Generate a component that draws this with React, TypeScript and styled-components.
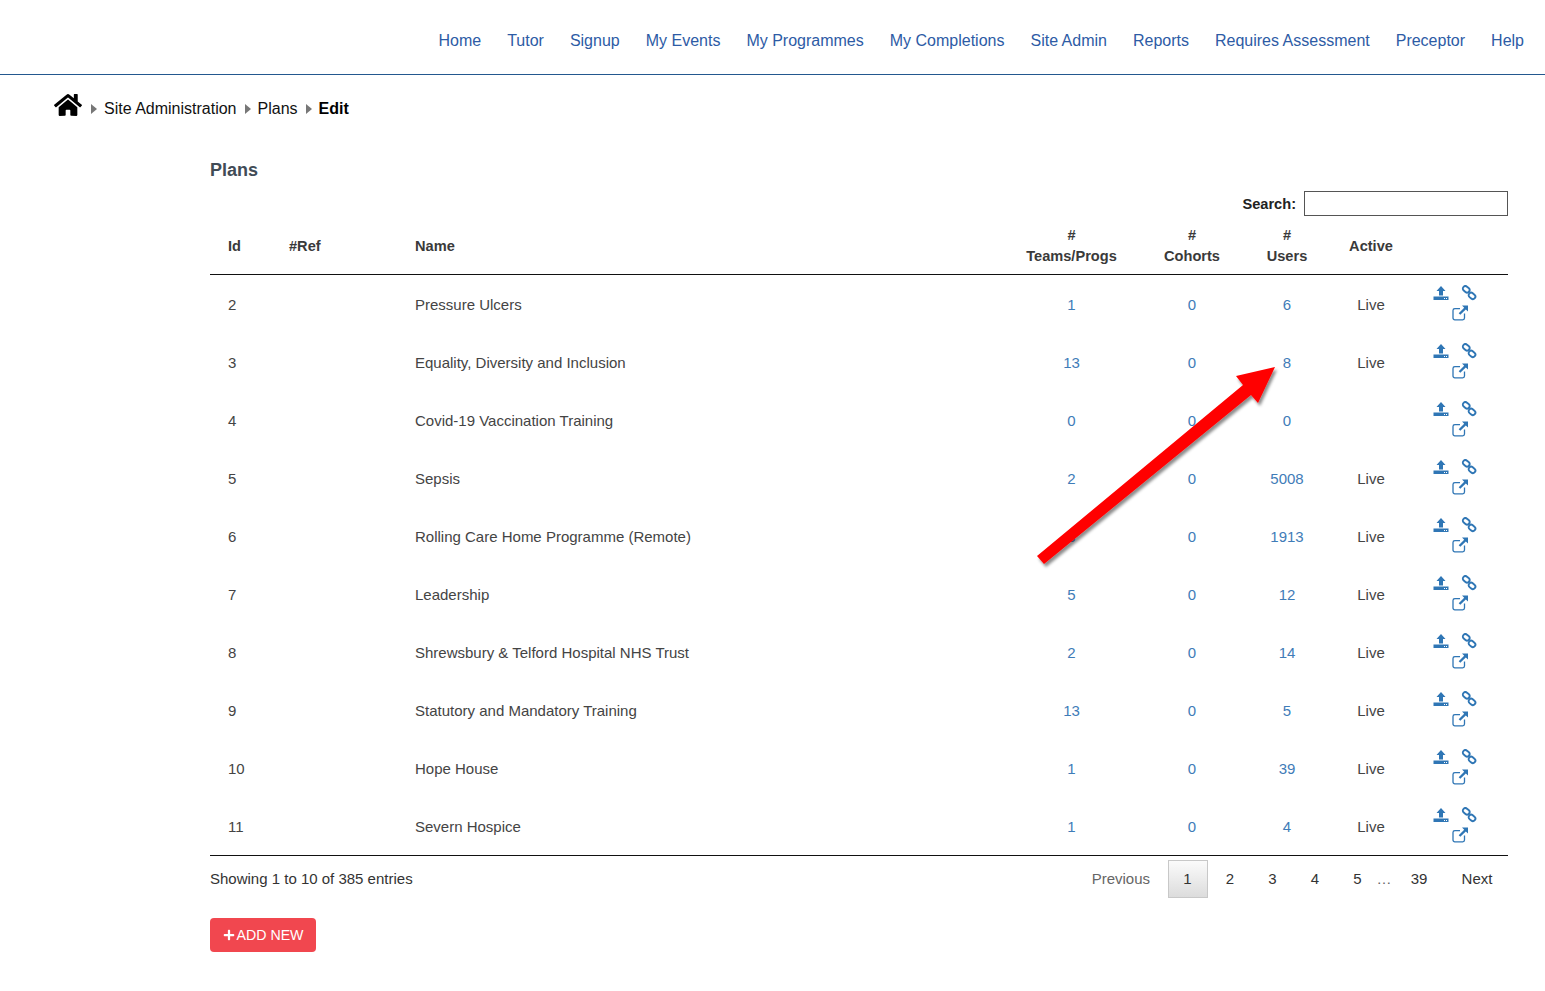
import React from 'react';
import styled, {createGlobalStyle} from 'styled-components';
import {FaHome, FaPlus} from 'react-icons/fa';

const GlobalStyle = createGlobalStyle`
    html, body {
        margin: 0;
        padding: 0;
        background: #fff;
        font-family: "Liberation Sans", Arial, sans-serif;
    }
`;

const Page = styled.div`
    position: relative;
    width: 1545px;
    height: 991px;
    overflow: hidden;
`;

const TopNav = styled.nav`
    display: flex;
    justify-content: flex-end;
    align-items: center;
    gap: 26px;
    height: 75px;
    padding: 8px 21px 0 0;
    box-sizing: border-box;
    border-bottom: 1px solid #23588f;
`;

const NavLink = styled.a`
    font-size: 16px;
    color: #2d5ba5;
    text-decoration: none;
`;

const Crumbs = styled.div`
    display: flex;
    align-items: center;
    height: 68px;
    padding-left: 54px;
    font-size: 16px;
    color: #111;
`;

const HomeIcon = styled(FaHome)`
    width: 28px;
    height: 28px;
    color: #000;
    margin: -8px 1px 0 0;
`;

const Caret = styled.span`
    width: 0;
    height: 0;
    margin: 0 7px 0 8px;
    border-left: 6px solid #777;
    border-top: 5px solid transparent;
    border-bottom: 5px solid transparent;
`;

const CurrentCrumb = styled.b`
    color: #000;
`;

const Main = styled.main`
    margin: 0 37px 0 210px;
`;

const Title = styled.h1`
    margin: 0;
    padding-top: 17px;
    height: 31px;
    line-height: 21px;
    font-size: 18px;
    font-weight: bold;
    color: #414b56;
`;

const SearchRow = styled.label`
    display: flex;
    justify-content: flex-end;
    align-items: center;
    gap: 8px;
    height: 25px;
    font-size: 14.6px;
    font-weight: bold;
    color: #222;
`;

const SearchInput = styled.input`
    width: 204px;
    height: 25px;
    box-sizing: border-box;
    border: 1px solid #555;
    background: #fff;
`;

const Table = styled.table`
    width: 1298px;
    margin-top: 3px;
    table-layout: fixed;
    border-collapse: separate;
    border-spacing: 0;
    border-bottom: 1px solid #111;
`;

const HeadCell = styled.th<{$center?: boolean; $pad?: number}>`
    height: 56px;
    padding: 0 0 ${p => (p.$center ? 2 : 0)}px ${p => p.$pad || 0}px;
    box-sizing: border-box;
    border-bottom: 1px solid #111;
    font-size: 14.6px;
    line-height: 21px;
    font-weight: bold;
    color: #3a3a3a;
    text-align: ${p => (p.$center ? 'center' : 'left')};
`;

const Cell = styled.td<{$center?: boolean; $pad?: number}>`
    height: 58px;
    padding: 0 0 0 ${p => p.$pad || 0}px;
    box-sizing: border-box;
    font-size: 15px;
    color: #444;
    text-align: ${p => (p.$center ? 'center' : 'left')};
`;

const CountLink = styled.a`
    color: #3f7cb8;
    text-decoration: none;
`;

const Actions = styled.div`
    display: flex;
    flex-wrap: wrap;
    justify-content: center;
    width: 62px;
    margin: -2px 0 0 8px;
`;

const ActionIcon = styled.svg`
    display: block;
    width: 16px;
    height: 16px;
    margin: 2px 6px;
    fill: #2f76b5;
`;

const ExternalIcon = styled(ActionIcon)`
    margin-left: 16px;
`;

const Footer = styled.div`
    display: flex;
    justify-content: space-between;
    align-items: center;
    height: 46px;
    font-size: 15px;
    color: #333;
`;

const EntryCount = styled.span`
    margin-bottom: 2px;
`;

const Pager = styled.div`
    display: flex;
    align-items: center;
    padding-right: 11px;
`;

const PageItem = styled.a<{$active?: boolean; $muted?: boolean}>`
    display: flex;
    align-items: center;
    justify-content: center;
    box-sizing: border-box;
    min-width: 40px;
    height: 38px;
    margin-left: 2.5px;
    padding-bottom: 2px;
    color: ${p => (p.$muted ? '#666' : '#333')};
    border: 1px solid ${p => (p.$active ? '#c8c8c8' : 'transparent')};
    background: ${p => (p.$active ? 'linear-gradient(#fbfbfb, #dcdcdc)' : 'none')};
`;

const PrevItem = styled(PageItem)`
    margin-right: 14px;
`;

const NextItem = styled(PageItem)`
    margin-left: 18px;
`;

const Ellipsis = styled.span`
    width: 20px;
    margin: 0 0 2px -1px;
    color: #666;
`;

const AddButton = styled.button`
    display: flex;
    align-items: center;
    justify-content: center;
    gap: 2px;
    width: 106px;
    height: 34px;
    margin-top: 16px;
    padding: 0;
    border: 0;
    border-radius: 4px;
    background: #f1474f;
    color: #fff;
    font-family: inherit;
    font-size: 14.2px;
`;

const Arrow = styled.svg`
    position: absolute;
    left: 1020px;
    top: 350px;
    width: 280px;
    height: 230px;
    overflow: visible;
`;

const navItems = ['Home', 'Tutor', 'Signup', 'My Events', 'My Programmes', 'My Completions', 'Site Admin', 'Reports', 'Requires Assessment', 'Preceptor', 'Help'];

const plans = [
    [2, 'Pressure Ulcers', 1, 0, 6, 'Live'],
    [3, 'Equality, Diversity and Inclusion', 13, 0, 8, 'Live'],
    [4, 'Covid-19 Vaccination Training', 0, 0, 0, ''],
    [5, 'Sepsis', 2, 0, 5008, 'Live'],
    [6, 'Rolling Care Home Programme (Remote)', 3, 0, 1913, 'Live'],
    [7, 'Leadership', 5, 0, 12, 'Live'],
    [8, 'Shrewsbury & Telford Hospital NHS Trust', 2, 0, 14, 'Live'],
    [9, 'Statutory and Mandatory Training', 13, 0, 5, 'Live'],
    [10, 'Hope House', 1, 0, 39, 'Live'],
    [11, 'Severn Hospice', 1, 0, 4, 'Live'],
];

const colWidths = [61, 126, 610, 129, 112, 78, 90, 92];

function RowIcons() {
    return (
        <Actions>
            <ActionIcon viewBox="0 0 16 16">
                <path d="M8 1 12.500 6H10V10.500H6V6H3.500Z" />
                <path fillRule="evenodd" d="M0.500 11.500H15.500V15H0.500ZM11 13V14H12V13ZM13 13V14H14V13Z" />
            </ActionIcon>
            <ActionIcon viewBox="0 0 16 16">
                <g fill="none" stroke="#2f76b5" strokeWidth="1.900">
                    <rect x="1.600" y="1.800" width="7.200" height="5" rx="2.500" transform="rotate(40 5.200 4.300)" />
                    <rect x="7.400" y="8.400" width="7.200" height="5" rx="2.500" transform="rotate(40 11 10.900)" />
                </g>
            </ActionIcon>
            <ExternalIcon viewBox="0 0 16 16">
                <path d="M12.500 8.500V13A1.800 1.800 0 0 1 10.700 14.800H2.800A1.800 1.800 0 0 1 1 13V5.500A1.800 1.800 0 0 1 2.800 3.700H8" fill="none" stroke="#2f76b5" strokeWidth="1.300" />
                <path d="M10 .5H16V6.500L13.800 4.400 8.300 9.800 6.700 8.200 12.200 2.700Z" />
            </ExternalIcon>
        </Actions>
    );
}

export default function App() {
    return (
        <Page>
            <GlobalStyle />
            <TopNav>
                {navItems.map(item => <NavLink key={item} href="#">{item}</NavLink>)}
            </TopNav>
            <Crumbs>
                <HomeIcon />
                <Caret />
                Site Administration
                <Caret />
                Plans
                <Caret />
                <CurrentCrumb>Edit</CurrentCrumb>
            </Crumbs>
            <Main>
                <Title>Plans</Title>
                <SearchRow>
                    Search:
                    <SearchInput />
                </SearchRow>
                <Table>
                    <colgroup>
                        {colWidths.map((w, i) => <col key={i} width={w} />)}
                    </colgroup>
                    <thead>
                        <tr>
                            <HeadCell $pad={18}>Id</HeadCell>
                            <HeadCell $pad={18}>#Ref</HeadCell>
                            <HeadCell $pad={18}>Name</HeadCell>
                            <HeadCell $center># <br />Teams/Progs</HeadCell>
                            <HeadCell $center># <br />Cohorts</HeadCell>
                            <HeadCell $center># <br />Users</HeadCell>
                            <HeadCell>
                                <ActiveLabel>Active</ActiveLabel>
                            </HeadCell>
                            <HeadCell />
                        </tr>
                    </thead>
                    <tbody>
                        {plans.map(([id, name, teams, cohorts, users, active]) => (
                            <tr key={id}>
                                <Cell $pad={18}>{id}</Cell>
                                <Cell />
                                <Cell $pad={18}>{name}</Cell>
                                <Cell $center><CountLink href="#">{teams}</CountLink></Cell>
                                <Cell $center><CountLink href="#">{cohorts}</CountLink></Cell>
                                <Cell $center><CountLink href="#">{users}</CountLink></Cell>
                                <Cell $center>{active}</Cell>
                                <Cell><RowIcons /></Cell>
                            </tr>
                        ))}
                    </tbody>
                </Table>
                <Footer>
                    <EntryCount>Showing 1 to 10 of 385 entries</EntryCount>
                    <Pager>
                        <PrevItem $muted>Previous</PrevItem>
                        <PageItem $active>1</PageItem>
                        <PageItem>2</PageItem>
                        <PageItem>3</PageItem>
                        <PageItem>4</PageItem>
                        <PageItem>5</PageItem>
                        <Ellipsis>…</Ellipsis>
                        <PageItem>39</PageItem>
                        <NextItem>Next</NextItem>
                    </Pager>
                </Footer>
                <AddButton><FaPlus size={12} />ADD NEW</AddButton>
            </Main>
            <Arrow viewBox="0 0 280 230">
                <defs>
                    <filter id="arrowShadow" x="-10%" y="-10%" width="120%" height="120%">
                        <feDropShadow dx="2" dy="3" stdDeviation="1.500" floodColor="#000" floodOpacity="0.45" />
                    </filter>
                </defs>
                <polygon
                    points="17,206 223,35 216,26 255,17 238,53 231,45 24,214"
                    fill="#ff0000"
                    filter="url(#arrowShadow)"
                />
            </Arrow>
        </Page>
    );
}

const ActiveLabel = styled.span`
    display: block;
    text-align: center;
`;
